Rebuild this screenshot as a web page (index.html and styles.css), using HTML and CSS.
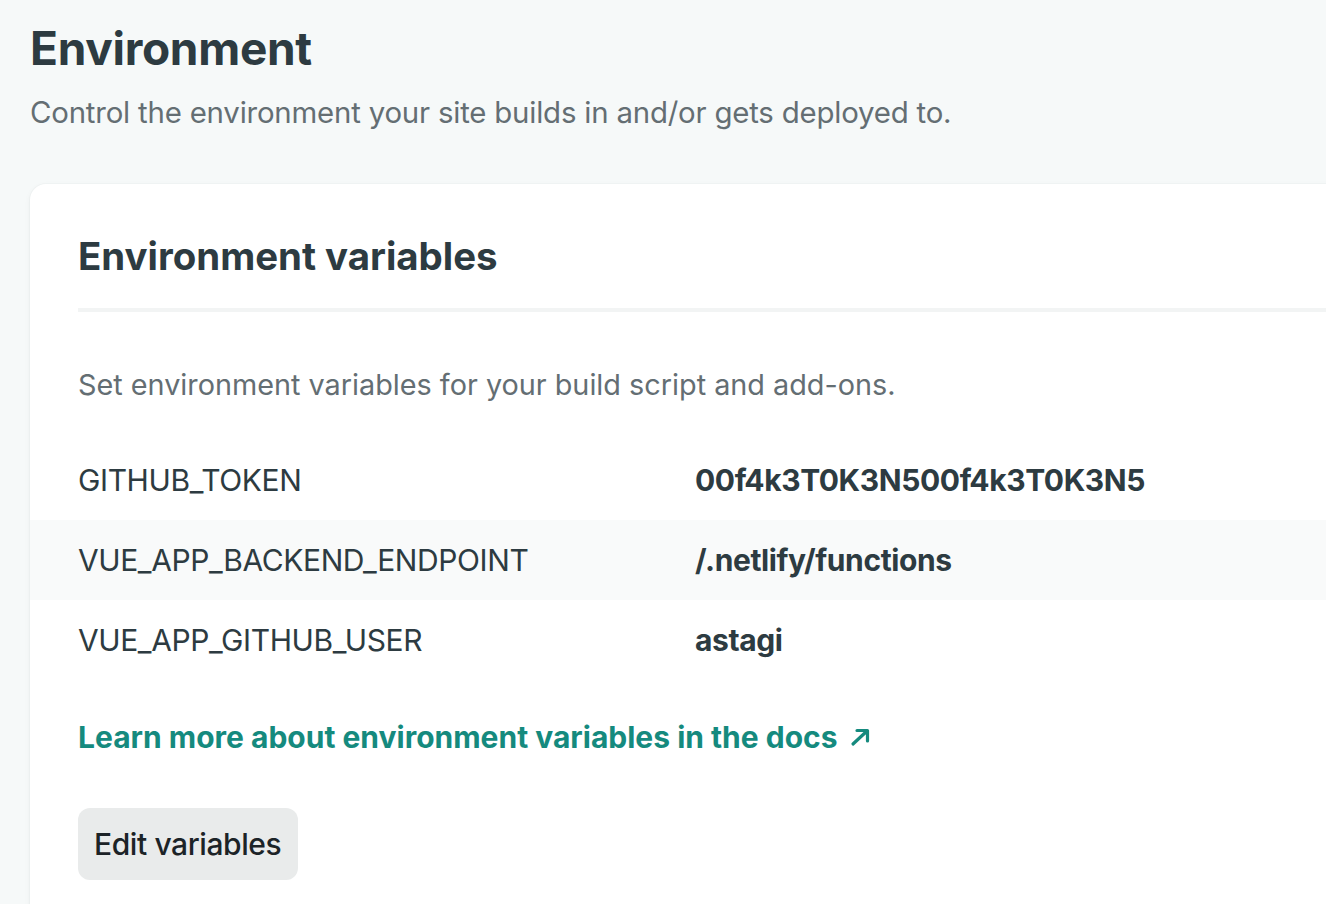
FILE: index.html
```html
<!DOCTYPE html>
<html lang="en">
<head>
<meta charset="utf-8">
<title>Environment</title>
<link rel="stylesheet" href="styles.css">
</head>
<body>
<main class="page">
  <header class="page-header">
    <h1 class="page-title">Environment</h1>
    <p class="page-subtitle">Control the environment your site builds in and/or gets deployed to.</p>
  </header>
  <section class="card">
    <div class="card-header">
      <h2 class="card-title">Environment variables</h2>
    </div>
    <p class="card-desc">Set environment variables for your build script and add-ons.</p>
    <dl class="vars">
      <div class="var-row">
        <dt class="var-key">GITHUB_TOKEN</dt>
        <dd class="var-value">00f4k3T0K3N500f4k3T0K3N5</dd>
      </div>
      <div class="var-row var-row-alt">
        <dt class="var-key">VUE_APP_BACKEND_ENDPOINT</dt>
        <dd class="var-value">/.netlify/functions</dd>
      </div>
      <div class="var-row">
        <dt class="var-key">VUE_APP_GITHUB_USER</dt>
        <dd class="var-value">astagi</dd>
      </div>
    </dl>
    <a class="docs-link" href="#">Learn more about environment variables in the docs <svg class="arrow" width="22" height="20" viewBox="0 0 22 20" aria-hidden="true"><path d="M3 17 L17 4 M7 3.5 H17.5 V14" fill="none" stroke="currentColor" stroke-width="3.2" stroke-linecap="round" stroke-linejoin="round"/></svg></a>
    <div class="actions">
      <button class="btn" type="button">Edit variables</button>
    </div>
  </section>
</main>
</body>
</html>
```

FILE: styles.css
```css
* { box-sizing: border-box; }
html, body {
  margin: 0;
  padding: 0;
  background: #f6f9f9;
  font-family: Inter, "Noto Sans", "Liberation Sans", sans-serif;
  color: #2d3b41;
  overflow: hidden;
}
.page {
  padding: 20px 0 0 30px;
}
.page-title {
  margin: 0;
  font-size: 46px;
  line-height: 56px;
  font-weight: 700;
  letter-spacing: -0.3px;
  color: #2d3b41;
}
.page-subtitle {
  margin: 13px 0 0;
  font-size: 29.4px;
  line-height: 48px;
  color: #646e73;
  letter-spacing: -0.2px;
}
.card {
  margin: 47px -60px 0 0;
  background: #fff;
  border-radius: 16px;
  padding: 48px 0 40px 48px;
  box-shadow: 0 0 0 1px rgba(14, 30, 37, 0.02), 0 2px 6px rgba(14, 30, 37, 0.05);
}
.card-header {
  padding-bottom: 28px;
  border-bottom: 4px solid #f2f4f4;
}
.card-title {
  margin: 0;
  font-size: 38.4px;
  line-height: 48px;
  font-weight: 700;
  color: #2d3b41;
}
.card-desc {
  margin: 49px 0 0;
  font-size: 28.8px;
  line-height: 48px;
  color: #646e73;
}
.vars {
  margin: 31px 0 0 -48px;
  padding: 0;
}
.var-row {
  display: flex;
  align-items: center;
  height: 80px;
  padding-left: 48px;
}
.var-row-alt {
  background: #f9fafa;
}
.var-key {
  width: 617px;
  margin: 0;
  font-size: 30px;
  letter-spacing: -0.4px;
  color: #2d3b41;
}
.var-value {
  margin: 0;
  font-size: 30px;
  font-weight: 700;
  letter-spacing: -0.4px;
  color: #2d3b41;
}
.docs-link {
  display: inline-flex;
  align-items: center;
  gap: 12px;
  margin-top: 33px;
  font-size: 30px;
  line-height: 48px;
  font-weight: 700;
  letter-spacing: 0;
  color: #158a7e;
  text-decoration: none;
}
.arrow { display: block; }
.actions {
  margin-top: 47px;
}
.btn {
  height: 72px;
  width: 220px;
  padding: 0 16px;
  border: 0;
  border-radius: 12px;
  background: #e9ebeb;
  font-family: inherit;
  font-size: 30px;
  font-weight: 500;
  letter-spacing: -0.4px;
  color: #1c2327;
  text-align: left;
}
```
